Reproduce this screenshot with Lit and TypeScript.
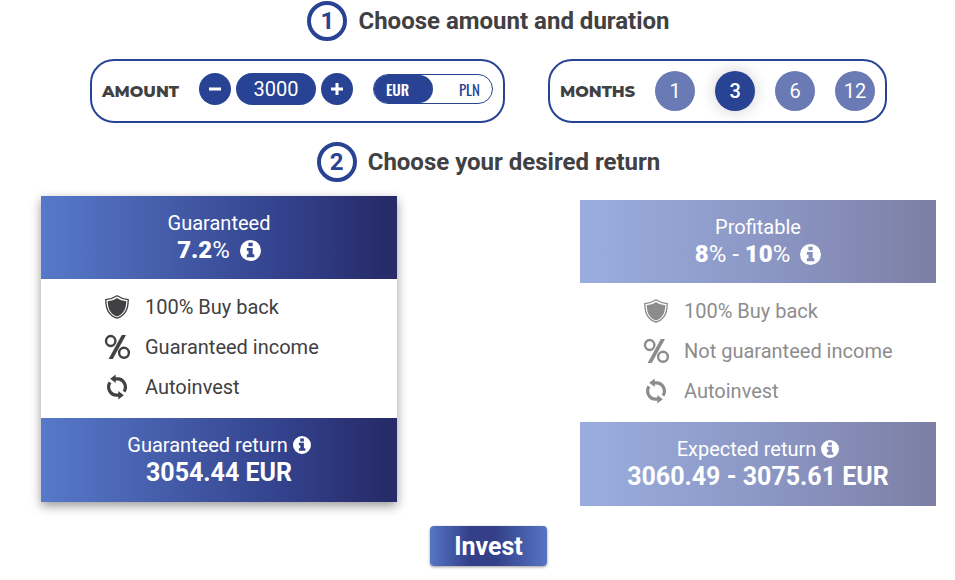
import { LitElement, html, css, svg } from "lit";
import { customElement, property, state } from "lit/decorators.js";
import { classMap } from "lit/directives/class-map.js";

type IconName = "info" | "shield" | "percent" | "refresh";

const ICONS: Record<IconName, unknown> = {
  info: svg`<path fill-rule="evenodd" d="M12 0a12 12 0 1 0 0 24a12 12 0 0 0 0-24z M9.600 3.200h4.900v4H9.600z M7.800 9h6.700v7.300H16.400v3.400H7.800v-3.400h1.900v-4H7.800z"/>`,
  shield: svg`<path fill="none" stroke="currentColor" stroke-width="1.300" d="M12 .8C9.300 2.600 4.500 4.300 .8 4.700C.7 13.500 3.500 20.500 12 23.200C20.500 20.500 23.300 13.500 23.200 4.700C19.500 4.300 14.700 2.600 12 .8z"/><path d="M12 2.900C9.500 4.600 6 5.800 2.700 6.200C2.900 13.400 5.100 19.200 12 21.600C18.900 19.200 21.100 13.400 21.300 6.200C18 5.800 14.500 4.600 12 2.900z"/>`,
  percent: svg`<g fill="none" stroke="currentColor" stroke-width="2.400"><ellipse cx="5.700" cy="6" rx="4.700" ry="5"/><ellipse cx="19" cy="17.800" rx="4.900" ry="5"/></g><path d="M16.800 0H21L7.800 24H3.600z"/>`,
  refresh: svg`<g fill="none" stroke="currentColor" stroke-width="3.200"><path d="M9.500 3.800H12.500A7.900 8.200 0 0 1 19 16.600"/><path d="M15 20.200H11.500A7.900 8.200 0 0 1 5 7.400"/></g><path d="M10.700 -.5V8.100L5.200 3.800z M13.300 24.500V15.900L18.800 20.200z"/>`,
};

const icon = (name: IconName) =>
  html`<svg class="icon ${name}" viewBox="0 0 24 24" fill="currentColor" aria-hidden="true">${ICONS[name]}</svg>`;

const iconStyles = css`
  .icon {
    display: block;
    width: 24px;
    height: 24px;
    flex: none;
    overflow: visible;
  }
`;

@customElement("offer-card")
class OfferCard extends LitElement {
  @property() name = "";
  @property({ attribute: false }) rates: string[] = [];
  @property() income = "";
  @property() resultLabel = "";
  @property() result = "";
  @property({ type: Boolean }) muted = false;

  static styles = [
    iconStyles,
    css`
      :host {
        display: block;
        color: #414042;
        background: #fff;
      }
      .card {
        box-shadow: 0 4px 10px rgba(0, 0, 0, 0.4);
      }
      .card.muted {
        opacity: 0.6;
        box-shadow: none;
      }
      .band {
        display: flex;
        flex-direction: column;
        align-items: center;
        padding: 13px 8px 15px;
        color: #fff;
        background: linear-gradient(90deg, #5779c9 0%, #32408a 70%, #272b69 97%);
        font-size: 20px;
        line-height: 28px;
      }
      header.band {
        padding-bottom: 16px;
      }
      .muted .band {
        background: linear-gradient(90deg, #5779c9 0%, #3c4c97 60%, #272b69 100%);
      }
      .line {
        display: flex;
        align-items: center;
        justify-content: center;
        margin: 0;
        gap: 5px;
        font-weight: 400;
        font-size: 20px;
      }
      .rate {
        gap: 10px;
        font-size: 24px;
        line-height: 26px;
      }
      .rate b {
        font-weight: 900;
      }
      .total {
        font-size: 25px;
        font-weight: 700;
      }
      .info {
        display: block;
        padding: 0;
        border: 0;
        color: inherit;
        background: none;
        cursor: pointer;
      }
      .info .icon {
        width: 18px;
        height: 18px;
      }
      .rate .icon {
        width: 21px;
        height: 21px;
      }
      ul {
        display: flex;
        flex-direction: column;
        gap: 12px;
        margin: 0;
        padding: 14px 8px 17px 64px;
        list-style: none;
      }
      li {
        display: flex;
        align-items: center;
        gap: 16px;
        font-size: 20px;
        line-height: 28px;
      }
    `,
  ];

  private info(about: string) {
    return html`<button class="info" type="button" aria-label="About ${about}">${icon("info")}</button>`;
  }

  render() {
    return html`
      <article class="card ${classMap({ muted: this.muted })}">
        <header class="band">
          <h3 class="line">${this.name}</h3>
          <p class="line rate">
            <span>${this.rates.map((r, i) => html`${i ? " - " : ""}<b>${r}</b>%`)}</span>
            ${this.info(this.name)}
          </p>
        </header>
        <ul>
          <li>${icon("shield")}100% Buy back</li>
          <li>${icon("percent")}${this.income}</li>
          <li>${icon("refresh")}Autoinvest</li>
        </ul>
        <footer class="band">
          <p class="line">${this.resultLabel}${this.info(this.resultLabel)}</p>
          <p class="line total">${this.result}</p>
        </footer>
      </article>
    `;
  }
}

@customElement("app-root")
class AppRoot extends LitElement {
  @state() private amount = 3000;
  @state() private currency = "EUR";
  @state() private months = 3;

  static styles = css`
    :host {
      display: block;
      font-family: Roboto, "Liberation Sans", sans-serif;
      color: #414042;
      background: #fff;
    }
    main {
      display: flex;
      flex-direction: column;
      padding: 1px 0 13px 22px;
    }
    .step {
      display: flex;
      align-items: center;
      justify-content: center;
      gap: 11px;
      margin: 0;
      font-size: 24px;
      line-height: 40px;
      font-weight: 700;
    }
    .num {
      box-sizing: border-box;
      width: 40px;
      height: 40px;
      border: 4px solid #284394;
      border-radius: 50%;
      color: #284394;
      line-height: 32px;
      text-align: center;
    }
    .settings {
      display: flex;
      flex-wrap: wrap;
      justify-content: center;
      gap: 16px 43px;
      margin: 18px 0 19px;
    }
    .panel {
      display: flex;
      align-items: center;
      box-sizing: border-box;
      height: 64px;
      margin: 0;
      padding: 0 10px;
      border: 2px solid #284394;
      border-radius: 24px;
    }
    .caption {
      margin-right: 20px;
      font-family: Montserrat, "Noto Sans", sans-serif;
      font-size: 16px;
      font-weight: 800;
    }
    .stepper {
      display: flex;
      gap: 5px;
      margin: -4px 20px 0 0;
    }
    .round {
      display: grid;
      place-items: center;
      width: 32px;
      height: 32px;
      padding: 0;
      border: 0;
      border-radius: 50%;
      color: #fff;
      background: #284394;
      cursor: pointer;
    }
    .round svg {
      width: 12px;
      height: 12px;
    }
    .amount {
      box-sizing: border-box;
      width: 80px;
      height: 32px;
      padding: 0;
      border: 0;
      border-radius: 16px;
      color: #fff;
      background: #284394;
      font: 400 20px Roboto, sans-serif;
      text-align: center;
    }
    .switch {
      display: flex;
      justify-content: space-between;
      box-sizing: border-box;
      width: 120px;
      height: 30px;
      margin-top: -4px;
      border: 1px solid #284394;
      border-radius: 15px;
      font-family: Oswald, "Roboto Condensed", "Liberation Sans Narrow", sans-serif;
      font-size: 15px;
      line-height: 28px;
      color: #284394;
    }
    .option {
      position: relative;
      box-sizing: border-box;
      width: 60px;
      padding: 0 12px;
      border-radius: 15px;
      text-align: right;
    }
    .option:first-child {
      text-align: left;
    }
    .option.on {
      color: #fff;
      background: #284394;
      font-weight: 500;
    }
    .option input,
    .month input {
      position: absolute;
      inset: 0;
      margin: 0;
      appearance: none;
      cursor: pointer;
    }
    .months {
      display: flex;
      gap: 20px;
    }
    .month {
      position: relative;
      width: 40px;
      height: 40px;
      border-radius: 50%;
      color: #fff;
      background: #697ab4;
      font-size: 20px;
      line-height: 40px;
      text-align: center;
    }
    .month.on {
      background: #284394;
      box-shadow: 0 0 16px rgba(0, 0, 0, 0.2);
      font-weight: 500;
    }
    .offers {
      display: flex;
      justify-content: space-between;
      align-items: flex-start;
      gap: 20px;
      margin: 14px 19px 20px;
    }
    offer-card {
      flex: 0 1 356px;
    }
    offer-card[muted] {
      margin-top: 4px;
    }
    .invest {
      align-self: center;
      height: 40px;
      padding: 0 24px;
      border: 0;
      border-radius: 4px;
      color: #fff;
      background: linear-gradient(90deg, #5575c4 0%, #333f88 35%, #333f88 55%, #5575c4 100%);
      box-shadow: 0 1px 3px rgba(0, 0, 0, 0.4);
      font: 700 25px Roboto, sans-serif;
      cursor: pointer;
    }
  `;

  private change(by: number) {
    this.amount = Math.max(0, this.amount + by);
  }

  render() {
    return html`
      <main>
        <h2 class="step"><span class="num">1</span>Choose amount and duration</h2>
        <form class="settings" @submit=${(e: Event) => e.preventDefault()}>
          <div class="panel">
            <label class="caption" for="amount">AMOUNT</label>
            <div class="stepper">
              <button class="round" type="button" aria-label="Decrease" @click=${() => this.change(-100)}>
                <svg viewBox="0 0 12 12" fill="currentColor"><path d="M0 4.500h12v3H0z" /></svg>
              </button>
              <input
                class="amount"
                id="amount"
                inputmode="numeric"
                .value=${String(this.amount)}
                @change=${(e: Event) => (this.amount = Number((e.target as HTMLInputElement).value) || 0)}
              />
              <button class="round" type="button" aria-label="Increase" @click=${() => this.change(100)}>
                <svg viewBox="0 0 12 12" fill="currentColor"><path d="M4.500 0h3v4.500H12v3H7.500V12h-3V7.500H0v-3h4.500z" /></svg>
              </button>
            </div>
            <div class="switch" role="radiogroup" aria-label="Currency">
              ${["EUR", "PLN"].map(
                (c) => html`<label class="option ${classMap({ on: c === this.currency })}"
                  ><input type="radio" name="currency" .checked=${c === this.currency} @change=${() => (this.currency = c)} />${c}</label
                >`,
              )}
            </div>
          </div>
          <div class="panel">
            <span class="caption" id="months">MONTHS</span>
            <div class="months" role="radiogroup" aria-labelledby="months">
              ${[1, 3, 6, 12].map(
                (m) => html`<label class="month ${classMap({ on: m === this.months })}"
                  ><input type="radio" name="months" .checked=${m === this.months} @change=${() => (this.months = m)} />${m}</label
                >`,
              )}
            </div>
          </div>
        </form>
        <h2 class="step"><span class="num">2</span>Choose your desired return</h2>
        <section class="offers">
          <offer-card
            name="Guaranteed"
            .rates=${["7.2"]}
            income="Guaranteed income"
            resultLabel="Guaranteed return"
            result="3054.44 EUR"
          ></offer-card>
          <offer-card
            muted
            name="Profitable"
            .rates=${["8", "10"]}
            income="Not guaranteed income"
            resultLabel="Expected return"
            result="3060.49 - 3075.61 EUR"
          ></offer-card>
        </section>
        <button class="invest" type="button">Invest</button>
      </main>
    `;
  }
}
